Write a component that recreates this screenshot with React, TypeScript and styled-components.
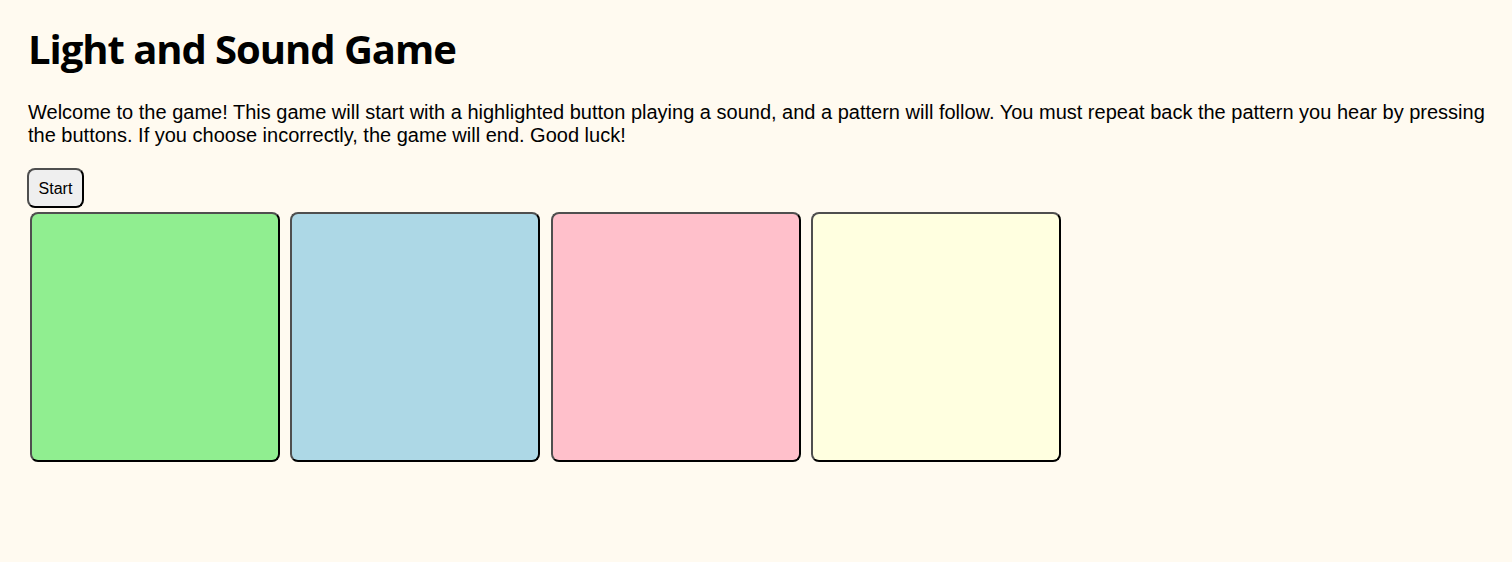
import React from "react";
import styled, { createGlobalStyle } from "styled-components";

const GlobalStyle = createGlobalStyle`
  html, body {
    margin: 0;
    padding: 0;
    background: #fffaf0;
  }
  body {
    font-family: "Liberation Sans", Arial, sans-serif;
    color: #000;
  }
`;

const Page = styled.main`
  display: flex;
  flex-direction: column;
  align-items: flex-start;
  padding: 25px 20px 40px 27px;
  min-height: 562px;
  box-sizing: border-box;
`;

const Title = styled.h1`
  margin: 0 0 0 1px;
  font-family: "Open Sans", "Noto Sans", sans-serif;
  font-weight: 700;
  font-size: 40px;
  line-height: 48px;
  letter-spacing: -1.05px;
`;

const Intro = styled.p`
  margin: 28px 0 0 1px;
  font-size: 20px;
  line-height: 23px;
`;

const StartButton = styled.button`
  margin-top: 21px;
  width: 57px;
  height: 40px;
  padding: 2px 0 0;
  border-width: 2px;
  border-style: solid;
  border-color: #4f4f4f #000 #000 #4f4f4f;
  border-radius: 8px;
  background: #efefef;
  font-family: "Liberation Sans", Arial, sans-serif;
  font-size: 16px;
  color: #000;
  cursor: pointer;
`;

const ButtonArea = styled.div`
  display: flex;
  gap: 10.45px;
  margin-top: 4px;
  padding-left: 3px;
`;

const GameButton = styled.button<{ $color: string }>`
  width: 250px;
  height: 250px;
  padding: 0;
  border-width: 2px;
  border-style: solid;
  border-color: #4f4f4f #000 #000 #4f4f4f;
  border-radius: 8px;
  background: ${(p) => p.$color};
  cursor: pointer;
`;

const colors = ["#90ee90", "#add8e6", "#ffc0cb", "#ffffe0"];

export default function App() {
  return (
    <>
      <GlobalStyle />
      <Page>
        <Title>Light and Sound Game</Title>
        <Intro>
          Welcome to the game! This game will start with a highlighted button playing a sound, and a
          pattern will follow. You must repeat back the pattern you hear by pressing the buttons. If
          you choose incorrectly, the game will end. Good luck!
        </Intro>
        <StartButton>Start</StartButton>
        <ButtonArea>
          {colors.map((c, i) => (
            <GameButton key={i} $color={c} aria-label={`button ${i + 1}`} />
          ))}
        </ButtonArea>
      </Page>
    </>
  );
}
